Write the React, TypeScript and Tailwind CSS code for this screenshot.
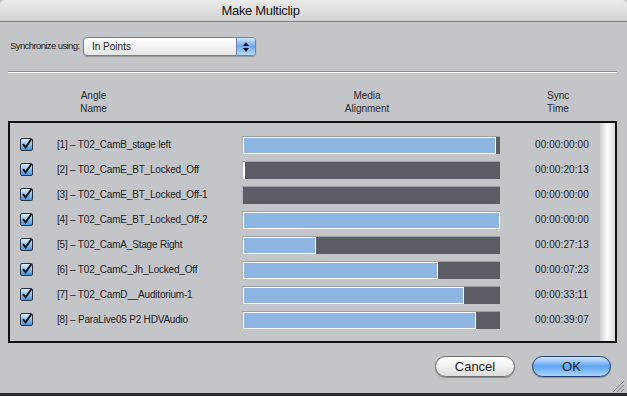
import React from "react";

const angles = [
  { name: "[1] – T02_CamB_stage left", fill: 253, time: "00:00:00:00" },
  { name: "[2] – T02_CamE_BT_Locked_Off", fill: 0, marker: true, time: "00:00:20:13" },
  { name: "[3] – T02_CamE_BT_Locked_Off-1", fill: 0, time: "00:00:00:00" },
  { name: "[4] – T02_CamE_BT_Locked_Off-2", fill: 257, time: "00:00:00:00" },
  { name: "[5] – T02_CamA_Stage Right", fill: 73, time: "00:00:27:13" },
  { name: "[6] – T02_CamC_Jh_Locked_Off", fill: 195, time: "00:00:07:23" },
  { name: "[7] – T02_CamD__Auditorium-1", fill: 221, time: "00:00:33:11" },
  { name: "[8] – ParaLive05 P2 HDVAudio", fill: 233, time: "00:00:39:07" },
];

const Check = () => (
  <svg width="13" height="13" viewBox="0 0 13 13">
    <defs>
      <linearGradient id="cb" x1="0" y1="0" x2="0" y2="1">
        <stop offset="0" stopColor="#e4f2ff" />
        <stop offset="0.5" stopColor="#8cc2f2" />
        <stop offset="1" stopColor="#3d8fe0" />
      </linearGradient>
    </defs>
    <rect x="0.5" y="0.5" width="12" height="12" rx="1.5" fill="url(#cb)" stroke="#2a3442" />
    <path d="M3 6.2 L5.6 9.4 L11.5 1" fill="none" stroke="#111" strokeWidth="2" />
  </svg>
);

const App = () => {
  return (
    <div className="w-[627px] h-[396px] bg-[#c4c5c9] flex flex-col overflow-hidden font-['Liberation_Sans',Arial,sans-serif] text-[#1c1c1c]">
      {/* title bar */}
      <div className="h-[22px] shrink-0 bg-gradient-to-b from-[#ececec] to-[#d2d2d2] border-b border-[#7c7c7c] rounded-t-[5px] flex items-center justify-center pr-[106px]">
        <span className="text-[13px] tracking-[-0.3px] text-[#111]">Make Multiclip</span>
      </div>

      {/* synchronize */}
      <div className="flex items-center mt-[15px] px-[10px]">
        <span className="text-[9.5px] tracking-[-0.6px] w-[73px] whitespace-nowrap">Synchronize using:</span>
        <div className="w-[173px] h-[19px] rounded-[4px] border border-[#7d7f86] bg-gradient-to-b from-white to-[#e6e6e6] flex items-center shadow-[0_1px_1px_rgba(0,0,0,0.25)] overflow-hidden">
          <span className="text-[10px] pl-[8px] flex-1">In Points</span>
          <div className="w-[19px] h-full border-l border-[#6a86b8] bg-gradient-to-b from-[#cfe6fd] via-[#6fa9ec] to-[#b8dafc] flex flex-col items-center justify-center gap-[2px]">
            <svg width="6" height="4" viewBox="0 0 6 4"><path d="M0 4 L3 0 L6 4Z" fill="#111" /></svg>
            <svg width="6" height="4" viewBox="0 0 6 4"><path d="M0 0 L3 4 L6 0Z" fill="#111" /></svg>
          </div>
        </div>
      </div>

      {/* separator */}
      <div className="mx-[8px] mt-[15px] h-[2px] border-t border-[#8e8e92] bg-white w-[609px]" />

      {/* headers */}
      <div className="flex mt-[16px] text-[10px] leading-[13px] text-[#2a2a2a]">
        <div className="w-[187px] text-center">Angle<br />Name</div>
        <div className="w-[360px] text-center">Media<br />Alignment</div>
        <div className="w-[20px] text-center">Sync<br />Time</div>
      </div>

      {/* table */}
      <div className="mx-[8px] mt-[6px] w-[609px] h-[222px] border-2 border-[#111] flex">
        <div className="flex-1 flex flex-col pt-[9px]">
          {angles.map((a, i) => (
            <div key={i} className="h-[25px] flex items-center">
              <div className="ml-[10px] w-[13px] h-[13px]">
                <Check />
              </div>
              <div className="ml-[24px] w-[184px] text-[10px] tracking-[-0.2px] whitespace-nowrap">{a.name}</div>
              <div className="w-[259px] h-[18px] bg-[#5c5d65] border-t border-t-[#9d9ea4] border-l-2 border-l-[#b9babf] flex">
                {a.fill > 0 && (
                  <div className="h-full bg-[#8fb6e2] border border-white" style={{ width: a.fill }} />
                )}
                {a.marker && <div className="h-full w-[2px] bg-white" />}
              </div>
              <div className="ml-[35px] text-[10px] tracking-[0.1px]">{a.time}</div>
            </div>
          ))}
        </div>
        <div className="w-[15px] h-full bg-gradient-to-r from-[#cfcfd2] via-white to-[#dadadd]" />
      </div>

      {/* buttons */}
      <div className="flex justify-end mt-[13px] pr-[16px] gap-[17px]">
        <button className="w-[80px] h-[21px] rounded-full border border-[#6f6f6f] bg-gradient-to-b from-white via-[#f1f1f1] to-[#dcdcdc] text-[13px] leading-none shadow-[0_1px_1px_rgba(0,0,0,0.3)]">
          Cancel
        </button>
        <button className="w-[79px] h-[21px] rounded-full border border-[#233e78] bg-gradient-to-b from-[#cfe7ff] via-[#5ea4f0] to-[#a9d6ff] text-[13px] leading-none shadow-[0_1px_1px_rgba(0,0,0,0.3)]">
          OK
        </button>
      </div>

      <div className="flex-1 flex justify-end items-end pr-[2px]">
        <svg width="13" height="12" viewBox="0 0 13 12" className="mb-[1px]">
          <path d="M12 1 L1 12 M12 5 L5 12 M12 9 L9 12" stroke="#7d7d7d" strokeWidth="1" />
        </svg>
      </div>
      <div className="h-[3px] shrink-0 bg-[#2b2b2d]" />
    </div>
  );
};

export default App;
